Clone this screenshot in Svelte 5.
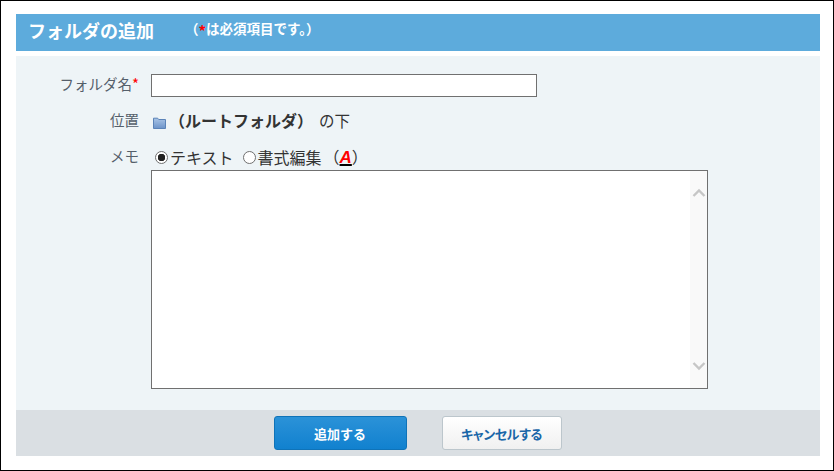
<script>
  let name = $state('');
  let memo = $state('');
  let mode = $state('text');
</script>

<div class="frame">
  <header class="title-bar">
    <h1>フォルダの追加</h1>
    <p class="note">（<span class="req">*</span>は必須項目です。）</p>
  </header>

  <form class="form" onsubmit={(e) => e.preventDefault()}>
    <div class="row name-row">
      <label class="label" for="folder-name">フォルダ名<span class="req">*</span></label>
      <input id="folder-name" class="name-input" type="text" bind:value={name} />
    </div>

    <div class="row place-row">
      <span class="label">位置</span>
      <svg class="folder" viewBox="0 0 13 12" width="13" height="12" aria-hidden="true">
        <defs>
          <linearGradient id="folder-fill" x1="0" y1="0" x2="0" y2="1">
            <stop offset="0" stop-color="#a9c4e6" />
            <stop offset="1" stop-color="#6c93c9" />
          </linearGradient>
        </defs>
        <path d="M0.5 11.5V1.2h4.2l1 1.3h6.8v9z" fill="url(#folder-fill)" stroke="#5b83b8" />
      </svg>
      <strong class="root">（ルートフォルダ）</strong>
      <span class="under">の下</span>
    </div>

    <div class="row mode-row">
      <span class="label">メモ</span>
      <div class="modes">
        <button type="button" class="radio" class:on={mode === 'text'} onclick={() => (mode = 'text')}>
          <span class="dot"></span>テキスト
        </button>
        <button type="button" class="radio" class:on={mode === 'rich'} onclick={() => (mode = 'rich')}>
          <span class="dot"></span>書式編集
        </button>
        <span class="hint">（<span class="a-mark">A</span>）</span>
      </div>
    </div>

    <div class="memo-wrap">
      <textarea class="memo" bind:value={memo}></textarea>
      <div class="scrollbar" aria-hidden="true">
        <svg viewBox="0 0 14 9" width="14" height="9"><path d="M1.5 8l5.5-5.5 5.5 5.5" fill="none" stroke="#c6c6c6" stroke-width="2.4" /></svg>
        <svg viewBox="0 0 14 9" width="14" height="9"><path d="M1.5 1l5.5 5.5 5.5-5.5" fill="none" stroke="#c6c6c6" stroke-width="2.4" /></svg>
      </div>
    </div>
  </form>

  <footer class="actions">
    <button type="button" class="btn primary">追加する</button>
    <button type="button" class="btn secondary">キャンセルする</button>
  </footer>
</div>

<style>
  :global(body) {
    margin: 0;
    background: #fff;
  }
  .frame {
    box-sizing: border-box;
    width: 834px;
    height: 471px;
    border: 1px solid #000;
    padding: 13px 13px 14px 15px;
    display: flex;
    flex-direction: column;
    font-family: "Noto Sans CJK JP", "Noto Sans", sans-serif;
    color: #333;
    background: #fff;
  }
  .title-bar {
    height: 37px;
    background: #5dabdc;
    color: #fff;
    display: flex;
    align-items: flex-start;
    padding-left: 12px;
    flex: none;
  }
  .title-bar h1 {
    margin: 3px 0 0;
    font-size: 18px;
    line-height: 26px;
    font-weight: 700;
  }
  .note {
    margin: 3px 0 0 31px;
    font-size: 13.5px;
    line-height: 22px;
    font-weight: 700;
  }
  .req {
    color: #f00;
  }
  .note .req {
    font-size: 15px;
    line-height: 1;
    vertical-align: -3px;
  }
  .label .req {
    font-size: 15px;
    line-height: 1;
  }
  .form {
    margin-top: 5px;
    height: 354px;
    flex: none;
    background: #eef4f7;
    box-sizing: border-box;
    padding-top: 18px;
  }
  .row {
    display: flex;
    align-items: flex-start;
  }
  .label {
    box-sizing: border-box;
    width: 123px;
    text-align: right;
    font-size: 14.5px;
    line-height: 19px;
    color: #555f6b;
    flex: none;
  }
  .name-input {
    box-sizing: border-box;
    width: 386px;
    height: 23px;
    margin: 0 0 0 12px;
    border: 1px solid #707070;
    background: #fff;
    padding: 0 3px;
    outline: none;
  }
  .place-row {
    margin-top: 13px;
    height: 24px;
  }
  .folder {
    margin-left: 14px;
    margin-top: 7px;
  }
  .root {
    font-size: 16px;
    line-height: 20px;
    margin-left: 3px;
    color: #333;
  }
  .under {
    font-size: 15.5px;
    line-height: 20px;
    margin-left: 6px;
  }
  .mode-row {
    margin-top: 12px;
    height: 20px;
  }
  .modes {
    display: flex;
    align-items: center;
    margin-left: 16px;
    font-size: 16px;
    line-height: 20px;
  }
  .radio {
    display: flex;
    align-items: center;
    border: 0;
    padding: 0;
    margin: 0 9px 0 0;
    background: none;
    color: #333;
    font: inherit;
    cursor: pointer;
  }
  .dot {
    box-sizing: border-box;
    width: 13px;
    height: 13px;
    border: 1px solid #707070;
    border-radius: 50%;
    background: #fff;
    margin-right: 2px;
  }
  .radio.on .dot {
    background: radial-gradient(circle, #222 0 3.5px, #fff 4px);
  }
  .a-mark {
    color: #f00;
    font-family: "Liberation Sans", sans-serif;
    font-size: 17px;
    font-weight: 700;
    font-style: italic;
    text-decoration: underline;
    text-decoration-color: #000;
    text-decoration-thickness: 2px;
  }
  .hint {
    margin-left: -7px;
  }
  .memo-wrap {
    position: relative;
    box-sizing: border-box;
    width: 557px;
    height: 219px;
    margin: 4px 0 0 135px;
    border: 1px solid #707070;
    background: #fff;
  }
  .memo {
    display: block;
    box-sizing: border-box;
    width: 100%;
    height: 100%;
    border: 0;
    padding: 3px 20px 3px 3px;
    resize: none;
    outline: none;
    background: transparent;
  }
  .scrollbar {
    position: absolute;
    top: 0;
    right: 0;
    bottom: 0;
    width: 17px;
    background: #f9f9f9;
    display: flex;
    flex-direction: column;
    justify-content: space-between;
    align-items: center;
    padding: 17px 0 17px;
    box-sizing: border-box;
    pointer-events: none;
  }
  .actions {
    flex: none;
    height: 46px;
    background: #dadfe3;
    display: flex;
    justify-content: center;
    align-items: center;
    gap: 35px;
    padding-right: 1px;
  }
  .btn {
    box-sizing: border-box;
    height: 34px;
    border-radius: 3px;
    font: 700 13px "Noto Sans CJK JP", "Noto Sans", sans-serif;
    cursor: pointer;
  }
  .primary {
    width: 133px;
    color: #fff;
    background: linear-gradient(#2b92d8, #1181cf);
    border: 1px solid #0f73b8;
  }
  .secondary {
    width: 120px;
    color: #1a66a8;
    background: linear-gradient(#fff, #f0f0f0);
    border: 1px solid #bcc6cc;
    font-feature-settings: "palt";
    letter-spacing: -0.4px;
  }
</style>
